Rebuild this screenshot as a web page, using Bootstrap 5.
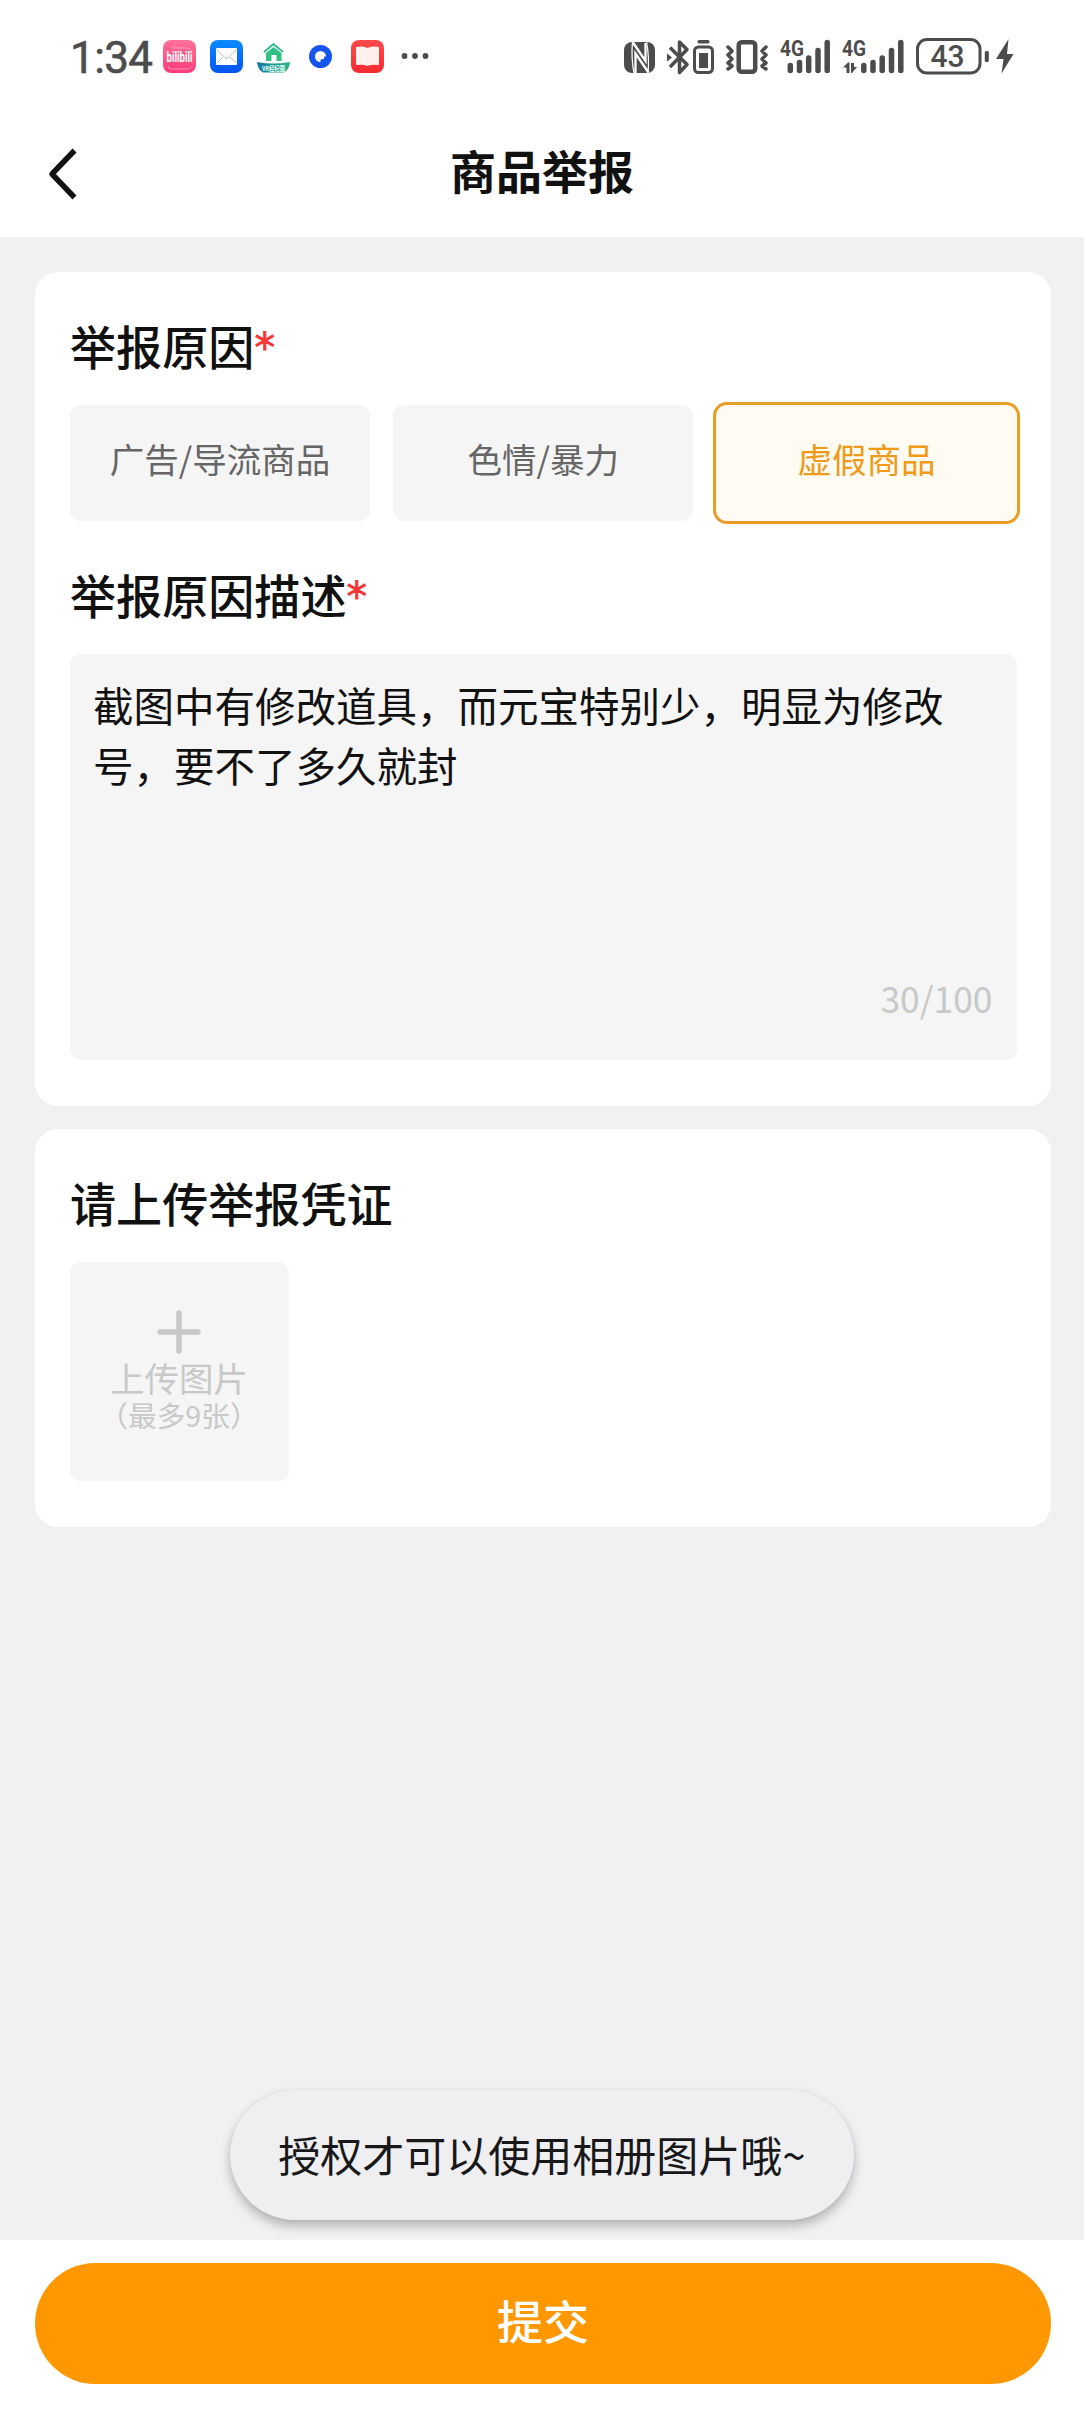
<!DOCTYPE html>
<html lang="zh-CN">
<head>
<meta charset="utf-8">
<meta name="viewport" content="width=device-width, initial-scale=1">
<title>商品举报</title>
<link href="https://cdn.jsdelivr.net/npm/bootstrap@5.3.0/dist/css/bootstrap.min.css" rel="stylesheet">
<style>
body{background:#f1f1f1;color:#111;font-family:"Noto Sans CJK SC",sans-serif;min-height:2412px}
svg{display:block;flex:none}
.status{height:112px;padding:1px 70px 0 70px;color:#4c4c4c}
.clock{font:400 44px/44px Roboto,sans-serif;width:93px;letter-spacing:-.6px;padding-top:2px;-webkit-text-stroke:.6px #4c4c4c}
.topbar{height:125px}
.topbar h1{font-size:46px;font-weight:700;line-height:46px;margin:0;padding-bottom:11px}
.back{width:126px;padding:0 0 2px 46px}
.page{padding:35px 33px 0 35px;gap:23px}
.sheet{border:0;border-radius:23px;padding:50px 34.5px 46px 35px}
.sheet h2{font-size:46.1px;font-weight:500;line-height:46px;height:46px;margin:0 0 37px}
.req{color:#f53535;font-family:"DejaVu Sans",sans-serif;font-size:41px;font-weight:400;line-height:0;vertical-align:3px;-webkit-text-stroke:.8px #f53535}
.reasons{gap:23px;margin-bottom:50px}
.chip{height:116px;background:#f5f5f5;border:0;border-radius:11px;color:#666;font-size:34.5px;line-height:40px;padding:0 0 10px}
.chip.active{background:#fffaf2;color:#f09a18;box-shadow:0 0 0 3px #e89d24}
.describe,.describe:focus{height:406px;background:#f5f5f5;border:0;border-radius:11px;resize:none;overflow:hidden;color:#111;font-size:40.5px;line-height:60px;padding:21px 33px 20px 23px}
.counter{right:24px;bottom:42px;color:#c8c8c8;font-size:35.4px;line-height:40px}
.upload{width:219px;height:219px;background:#f5f5f5;border-radius:11px;color:#c8c8c8;padding:48px 1px 0 0}
.upload .t1{font-size:34.5px;line-height:40px;margin-top:3px}
.upload .t2{font-size:28.7px;line-height:36px}
.foot{background:#fff;height:172px;padding:23px 33px 0 35px}
.submit{height:121px;background:#ff9800;color:#fff;font-size:46px;font-weight:500;line-height:46px;padding:0 0 10px}
.tip{bottom:192px;left:230px;width:624px;height:130px;border-radius:65px;background:#efeff1;color:#18181a;font-size:42px;line-height:48px;padding-bottom:2px;box-shadow:0 6px 11px rgba(0,0,0,.26),0 0 3px rgba(0,0,0,.06)}
</style>
</head>
<body class="d-flex flex-column position-relative">
<header class="bg-white">
  <div class="status d-flex align-items-center justify-content-between">
    <div class="d-flex align-items-center">
      <span class="clock">1:34</span>
      <svg width="272" height="34" viewBox="163 40 272 34">
        <defs>
          <linearGradient id="pk" x2="0" y2="1"><stop stop-color="#ff7098"/><stop offset="1" stop-color="#ff3b7c"/></linearGradient>
          <linearGradient id="bl" x2="0" y2="1"><stop stop-color="#0a8bff"/><stop offset="1" stop-color="#0054f0"/></linearGradient>
          <linearGradient id="rd" x2="0" y2="1"><stop stop-color="#ff4b4b"/><stop offset="1" stop-color="#f62a31"/></linearGradient>
          <linearGradient id="tl"><stop stop-color="#1878a0"/><stop offset="1" stop-color="#25b78a"/></linearGradient>
        </defs>
        <rect x="163" y="40" width="33" height="33" rx="8" fill="url(#pk)"/>
        <path d="M174 45l3 3h5l3-3M172 48h15q4 0 4 4M168 66q0 3 4 3h15q4 0 4-3" fill="none" stroke="#ff8fb2" stroke-width="1"/>
        <text x="179.500" y="62" text-anchor="middle" textLength="26" lengthAdjust="spacingAndGlyphs" font-family="Roboto,sans-serif" font-size="15" font-weight="700" fill="#fff">bilibili</text>
        <rect x="210" y="40" width="33" height="33" rx="8" fill="url(#bl)"/>
        <rect x="216" y="48" width="21" height="17" rx="1" fill="#fff"/>
        <path d="M217 50l7.500 7.500q2 1.800 4 0L236 50M217 63l6-6M236 63l-6-6" fill="none" stroke="#b4c0e2" stroke-width="1"/>
        <path d="M264 52l9.500-8 9.500 8" fill="none" stroke="#35b99a" stroke-width="2"/>
        <path d="M266 53l7.500-6 8 6v8h-5v-6h-5v6h-5.500z" fill="#2fc182"/>
        <path d="M257 62q16 3 33 0-1 8-6 10.500H263Q258 70 257 62z" fill="url(#tl)"/>
        <text x="273.500" y="70.500" text-anchor="middle" textLength="23" lengthAdjust="spacingAndGlyphs" font-family="Roboto,'Noto Sans CJK SC',sans-serif" font-size="7" font-weight="700" fill="#e9fff9">VR经纪圈</text>
        <circle cx="320.500" cy="56.500" r="11.500" fill="#1553f2"/>
        <path d="M320.500 51a5.500 5.500 0 1 0 0 11v-2.500l3.500-.500v-2.500h2A5.500 5.500 0 0 0 320.500 51z" fill="#fff"/>
        <rect x="351" y="40" width="33" height="33" rx="8" fill="url(#rd)"/>
        <path d="M356 47q8-1.500 11.500 1 3.500-2.500 11.500-1v18q-8-1-11.500 1-3.500-2-11.500-1z" fill="#fff0ee"/>
        <g fill="#4c4c4c"><circle cx="404.500" cy="56" r="2.900"/><circle cx="415" cy="56" r="2.900"/><circle cx="425.500" cy="56" r="2.900"/></g>
      </svg>
    </div>
    <svg width="391" height="60" viewBox="623 26 391 60" fill="#4c4c4c">
      <!-- NFC -->
      <rect x="624" y="41" width="31" height="31" rx="8"/>
      <path d="M632.500 40.500q-1.500 16 1.500 32M646.500 40.500q3 16 1.500 32" fill="none" stroke="#fff" stroke-width="1.200"/>
      <path d="M645.500 42V60L633 41.500M635.500 72V52.500L648.500 71.500" fill="none" stroke="#fff" stroke-width="2.300"/>
      <!-- Bluetooth -->
      <path d="M670 46.500l17 17-7.500 8V41l7.500 7.500-17 17.500" fill="none" stroke="#4c4c4c" stroke-width="3.500" stroke-linejoin="round"/>
      <path d="M667 52.500l5 4-5 4z"/>
      <rect x="694.500" y="46" width="18" height="25.500" rx="4" fill="none" stroke="#4c4c4c" stroke-width="3"/>
      <rect x="697.500" y="39" width="12" height="3.500" rx="1.500"/><rect x="699" y="52" width="9" height="15"/>
      <!-- Vibration -->
      <rect x="738.700" y="41.200" width="16.500" height="29.500" rx="3" fill="none" stroke="#4c4c4c" stroke-width="4.500"/>
      <path d="M728 46l4 4-4 4 4 4-4 4 4 3-4 3M766 46l-4 4 4 4-4 4 4 4-4 3 4 3" fill="none" stroke="#4c4c4c" stroke-width="3.500" stroke-linejoin="round" stroke-linecap="round"/>
      <!-- Signal 1 -->
      <text x="780" y="55" textLength="24" lengthAdjust="spacingAndGlyphs" font-family="Roboto,sans-serif" font-size="22.500" font-weight="700">4G</text>
      <path d="M790.300 64.500v5M799.500 61.500v8M808.700 57v12.500M818 49.500v20M827.200 41.500v28" fill="none" stroke="#4c4c4c" stroke-width="5.500" stroke-linecap="round"/>
      <!-- Signal 2 -->
      <text x="842" y="55" textLength="24" lengthAdjust="spacingAndGlyphs" font-family="Roboto,sans-serif" font-size="22.500" font-weight="700">4G</text>
      <path d="M843 66.500l5-5h1.500V72h-3v-5.500zM851 62h3v4h3l-5 6H851z"/>
      <path d="M863.800 64.500v5M873 61.500v8M882.200 57v12.500M891.500 49.500v20M900.800 41.500v28" fill="none" stroke="#4c4c4c" stroke-width="5.500" stroke-linecap="round"/>
      <!-- Battery -->
      <rect x="917.500" y="38.500" width="62.500" height="33.500" rx="9.500" fill="none" stroke="#4c4c4c" stroke-width="3"/>
      <text x="930.500" y="66" textLength="34" lengthAdjust="spacingAndGlyphs" font-family="Roboto,sans-serif" font-size="30.500" font-weight="500">43</text>
      <rect x="984.800" y="50" width="4" height="11" rx="1.500"/>
      <path d="M1008.500 38L996 58h7.500l-2 14.500L1013.500 53h-6.500z"/>
    </svg>
  </div>
  <nav class="topbar d-flex align-items-center">
    <div class="back">
      <svg width="34" height="56" viewBox="0 0 34 56"><path d="M28.500 4.500L6 28l22.500 23.500" fill="none" stroke="#111" stroke-width="5.500" stroke-linejoin="round"/></svg>
    </div>
    <h1 class="flex-fill text-center">商品举报</h1>
    <div class="back"></div>
  </nav>
</header>

<main class="page flex-fill d-flex flex-column">
  <section class="card sheet">
    <h2>举报原因<span class="req">*</span></h2>
    <div class="reasons d-flex">
      <button type="button" class="chip btn flex-fill w-100">广告/导流商品</button>
      <button type="button" class="chip btn flex-fill w-100">色情/暴力</button>
      <button type="button" class="chip btn flex-fill w-100 active">虚假商品</button>
    </div>
    <h2>举报原因描述<span class="req">*</span></h2>
    <div class="position-relative">
      <textarea class="describe form-control" spellcheck="false">截图中有修改道具，而元宝特别少，明显为修改号，要不了多久就封</textarea>
      <span class="counter position-absolute">30/100</span>
    </div>
  </section>
  <section class="card sheet">
    <h2>请上传举报凭证</h2>
    <div class="upload d-flex flex-column align-items-center text-nowrap">
      <svg width="44" height="44" viewBox="0 0 44 44"><path d="M22 3v38M3 22h38" stroke="#c8c8c8" stroke-width="5.500" stroke-linecap="round"/></svg>
      <span class="t1">上传图片</span>
      <span class="t2">（最多9张）</span>
    </div>
  </section>
</main>

<footer class="foot">
  <button type="button" class="submit btn rounded-pill w-100">提交</button>
</footer>
<div class="tip position-absolute d-flex align-items-center justify-content-center text-nowrap" role="status">授权才可以使用相册图片哦~</div>
<script src="https://cdn.jsdelivr.net/npm/bootstrap@5.3.0/dist/js/bootstrap.bundle.min.js"></script>
</body>
</html>
